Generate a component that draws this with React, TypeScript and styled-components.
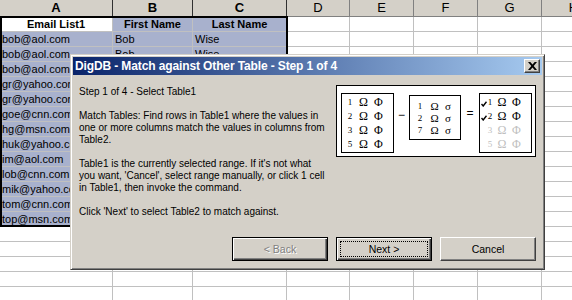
import React from "react";
import styled, { createGlobalStyle, css } from "styled-components";

const GlobalStyle = createGlobalStyle`
  html, body { margin: 0; padding: 0; background: #fff; overflow: hidden; }
  body { font-family: "Liberation Sans", Arial, sans-serif; }
`;

const Page = styled.div`
  position: relative;
  width: 572px;
  height: 300px;
  overflow: hidden;
`;

const Sheet = styled.div`
  display: grid;
  grid-template-columns: 113px 80px 94px 63px 64px 64px 64px 64px;
  grid-template-rows: 17px;
  grid-auto-rows: 15px;
`;

const ColHead = styled.div<{ $sel?: boolean }>`
  box-sizing: border-box;
  background: #d4d0c8;
  border-right: 1px solid ${(p) => (p.$sel ? "#303030" : "#808080")};
  border-bottom: 1px solid #808080;
  font: ${(p) => (p.$sel ? 700 : 400)} 13px/16px "Liberation Sans", Arial, sans-serif;
  text-align: center;
  color: #000;
`;

const Cell = styled.div<{ $sel?: boolean; $head?: boolean }>`
  box-sizing: border-box;
  border-right: 1px solid #c0c0c0;
  border-bottom: 1px solid #c0c0c0;
  background: ${(p) => (p.$sel ? "#a8b1cd" : "#fff")};
  font: ${(p) => (p.$head ? 700 : 400)} 11px/14px "Liberation Sans", Arial, sans-serif;
  text-align: ${(p) => (p.$head ? "center" : "left")};
  color: #000;
  padding: 0 2px;
  white-space: nowrap;
  overflow: hidden;
`;

const Selection = styled.div`
  position: absolute;
  left: 0;
  top: 16px;
  width: 288px;
  height: 211px;
  box-sizing: border-box;
  border: 2px solid #000;
  pointer-events: none;
`;

const Dialog = styled.div`
  position: absolute;
  left: 70px;
  top: 54px;
  width: 475px;
  height: 216px;
  box-sizing: border-box;
  background: #d4d0c8;
  border: 1px solid;
  border-color: #d4d0c8 #404040 #404040 #d4d0c8;
  box-shadow: inset 1px 1px #fff, inset -1px -1px #808080;
  padding: 2px;
  display: flex;
  flex-direction: column;
  font-family: "Liberation Sans", Arial, sans-serif;
`;

const TitleBar = styled.div`
  flex: none;
  height: 18px;
  display: flex;
  align-items: center;
  padding: 0 2px;
  background: linear-gradient(to right, #0a246a, #a6caf0);
`;

const Title = styled.div`
  flex: 1;
  color: #fff;
  font: 700 12px/18px "Liberation Sans", Arial, sans-serif;
  letter-spacing: -0.12px;
  white-space: nowrap;
`;

const CloseBtn = styled.div`
  width: 16px;
  height: 14px;
  box-sizing: border-box;
  background: #d4d0c8;
  border: 1px solid;
  border-color: #fff #404040 #404040 #fff;
  box-shadow: inset -1px -1px #808080;
  display: flex;
  align-items: center;
  justify-content: center;
`;

const Body = styled.div`
  flex: 1;
  display: flex;
  flex-direction: column;
  padding: 10px 6px 6px 6px;
`;

const TopRow = styled.div`
  display: flex;
  align-items: flex-start;
`;

const Text = styled.div`
  flex: 1;
  padding-top: 1px;
  font-size: 10px;
  line-height: 12px;
  color: #000;
  white-space: nowrap;
`;

const Para = styled.p`
  margin: 0 0 12px;
  &:last-child {
    margin-bottom: 0;
  }
`;

const Diagram = styled.div`
  flex: none;
  width: 200px;
  height: 72px;
  box-sizing: border-box;
  border: 1px solid #000;
  background: #fff;
  display: flex;
  align-items: flex-start;
  padding: 7px 3px 0 4px;
`;

const MiniTable = styled.div<{ $cols: string; $row: number; $w: number; $h: number; $pad: string; $top: number }>`
  flex: none;
  box-sizing: border-box;
  width: ${(p) => p.$w}px;
  height: ${(p) => p.$h}px;
  margin-top: ${(p) => p.$top}px;
  border: 1px solid #000;
  padding: ${(p) => p.$pad};
  display: grid;
  grid-template-columns: ${(p) => p.$cols};
  grid-auto-rows: ${(p) => p.$row}px;
  align-items: center;
  justify-items: center;
`;

const Num = styled.span<{ $dim?: boolean }>`
  font: 9px/10px "Liberation Serif", "DejaVu Serif", serif;
  color: ${(p) => (p.$dim ? "#c0c0c0" : "#000")};
`;

const Greek = styled.span<{ $dim?: boolean; $small?: boolean }>`
  font: ${(p) => (p.$small ? 11 : 12)}px/${(p) => (p.$small ? 11 : 12)}px "Liberation Serif", "DejaVu Serif", serif;
  color: ${(p) => (p.$dim ? "#c0c0c0" : "#000")};
`;

const Op = styled.div<{ $w: number; $top: number }>`
  flex: none;
  width: ${(p) => p.$w}px;
  margin-top: ${(p) => p.$top}px;
  text-align: center;
  font: 12px/12px "Liberation Sans", Arial, sans-serif;
  color: #000;
`;

const Buttons = styled.div`
  margin-top: auto;
  display: flex;
  justify-content: flex-end;
  gap: 8px;
`;

const Button = styled.button<{ $variant: "default" | "disabled" | "normal"; $focus?: boolean }>`
  width: 96px;
  height: 24px;
  box-sizing: border-box;
  margin: 0;
  padding: 0;
  background: #d4d0c8;
  font: 10.5px/20px "Liberation Sans", Arial, sans-serif;
  color: #000;
  ${(p) =>
    p.$variant === "normal"
      ? css`
          border: 1px solid;
          border-color: #fff #404040 #404040 #fff;
          box-shadow: inset -1px -1px #808080;
        `
      : css`
          border: 1px solid #000;
          box-shadow: inset 1px 1px #fff, inset -1px -1px #404040, inset -2px -2px #808080;
        `}
  ${(p) =>
    p.$variant === "disabled" &&
    css`
      color: #808080;
      text-shadow: 1px 1px #fff;
    `}
  ${(p) =>
    p.$focus &&
    css`
      outline: 1px dotted #000;
      outline-offset: -5px;
    `}
`;

const cols = ["A", "B", "C", "D", "E", "F", "G", "H"];
// Only the first two name rows are visible; the rest lie under the dialog.
const data: [string, string, string][] = [
  ["bob@aol.com", "Bob", "Wise"],
  ["bob@aol.com", "Bob", "Wise"],
  ["bob@aol.com", "", ""],
  ["gr@yahoo.com", "", ""],
  ["gr@yahoo.com", "", ""],
  ["goe@cnn.com", "", ""],
  ["hg@msn.com", "", ""],
  ["huk@yahoo.com", "", ""],
  ["im@aol.com", "", ""],
  ["lob@cnn.com", "", ""],
  ["mik@yahoo.com", "", ""],
  ["tom@cnn.com", "", ""],
  ["top@msn.com", "", ""],
];

const Check = () => (
  <svg width="6" height="6" viewBox="0 0 6 6">
    <path d="M0.5 3 L2.2 5 L5.5 0.8" fill="none" stroke="#000" strokeWidth="1.4" />
  </svg>
);

const CloseX = () => (
  <svg width="9" height="8" viewBox="0 0 9 8">
    <path d="M0 0 L2.3 0 L4.5 2.5 L6.7 0 L9 0 L5.7 4 L9 8 L6.7 8 L4.5 5.5 L2.3 8 L0 8 L3.3 4 Z" fill="#000" />
  </svg>
);

export default function App() {
  const blankRows = 5;
  return (
    <Page>
      <GlobalStyle />
      <Sheet>
        {cols.map((c, i) => (
          <ColHead key={c} $sel={i < 3}>
            {c}
          </ColHead>
        ))}
        <Cell $head>Email List1</Cell>
        <Cell $head $sel>
          First Name
        </Cell>
        <Cell $head $sel>
          Last Name
        </Cell>
        {cols.slice(3).map((c) => (
          <Cell key={"h" + c} />
        ))}
        {data.map((r, ri) => (
          <React.Fragment key={ri}>
            {r.map((v, ci) => (
              <Cell key={ci} $sel>
                {v}
              </Cell>
            ))}
            {cols.slice(3).map((c) => (
              <Cell key={c} />
            ))}
          </React.Fragment>
        ))}
        {Array.from({ length: blankRows }).map((_, ri) => (
          <React.Fragment key={"b" + ri}>
            {cols.map((c) => (
              <Cell key={c} />
            ))}
          </React.Fragment>
        ))}
      </Sheet>
      <Selection />
      <Dialog>
        <TitleBar>
          <Title>DigDB - Match against Other Table - Step 1 of 4</Title>
          <CloseBtn>
            <CloseX />
          </CloseBtn>
        </TitleBar>
        <Body>
          <TopRow>
            <Text>
              <Para>Step 1 of 4 - Select Table1</Para>
              <Para>
                Match Tables: Find rows in Table1 where the values in
                <br />
                one or more columns match the values in columns from
                <br />
                Table2.
              </Para>
              <Para>
                Table1 is the currently selected range. If it's not what
                <br />
                you want, 'Cancel', select range manually, or click 1 cell
                <br />
                in Table1, then invoke the command.
              </Para>
              <Para>Click 'Next' to select Table2 to match against.</Para>
            </Text>
            <Diagram>
              <MiniTable $cols="12px 15px 15px" $row={14} $w={53} $h={60} $pad="1px 0 0 2px" $top={0}>
                {["1", "2", "3", "5"].map((n) => (
                  <React.Fragment key={n}>
                    <Num>{n}</Num>
                    <Greek>Ω</Greek>
                    <Greek>Φ</Greek>
                  </React.Fragment>
                ))}
              </MiniTable>
              <Op $w={15} $top={16}>−</Op>
              <MiniTable $cols="14px 15px 12px" $row={12} $w={52} $h={45} $pad="4px 0 0 3px" $top={2}>
                {["1", "2", "7"].map((n) => (
                  <React.Fragment key={n}>
                    <Num>{n}</Num>
                    <Greek $small>Ω</Greek>
                    <Greek $small>σ</Greek>
                  </React.Fragment>
                ))}
              </MiniTable>
              <Op $w={18} $top={14}>=</Op>
              <MiniTable $cols="6px 6px 2px 14px 15px" $row={14} $w={53} $h={60} $pad="1px 0 0 1px" $top={0}>
                {["1", "2", "3", "5"].map((n, i) => {
                  const dim = i >= 2;
                  return (
                    <React.Fragment key={n}>
                      <span>{dim ? null : <Check />}</span>
                      <Num $dim={dim}>{n}</Num>
                      <span />
                      <Greek $dim={dim}>Ω</Greek>
                      <Greek $dim={dim}>Φ</Greek>
                    </React.Fragment>
                  );
                })}
              </MiniTable>
            </Diagram>
          </TopRow>
          <Buttons>
            <Button $variant="disabled">&lt; Back</Button>
            <Button $variant="default" $focus>
              Next &gt;
            </Button>
            <Button $variant="normal">Cancel</Button>
          </Buttons>
        </Body>
      </Dialog>
    </Page>
  );
}
